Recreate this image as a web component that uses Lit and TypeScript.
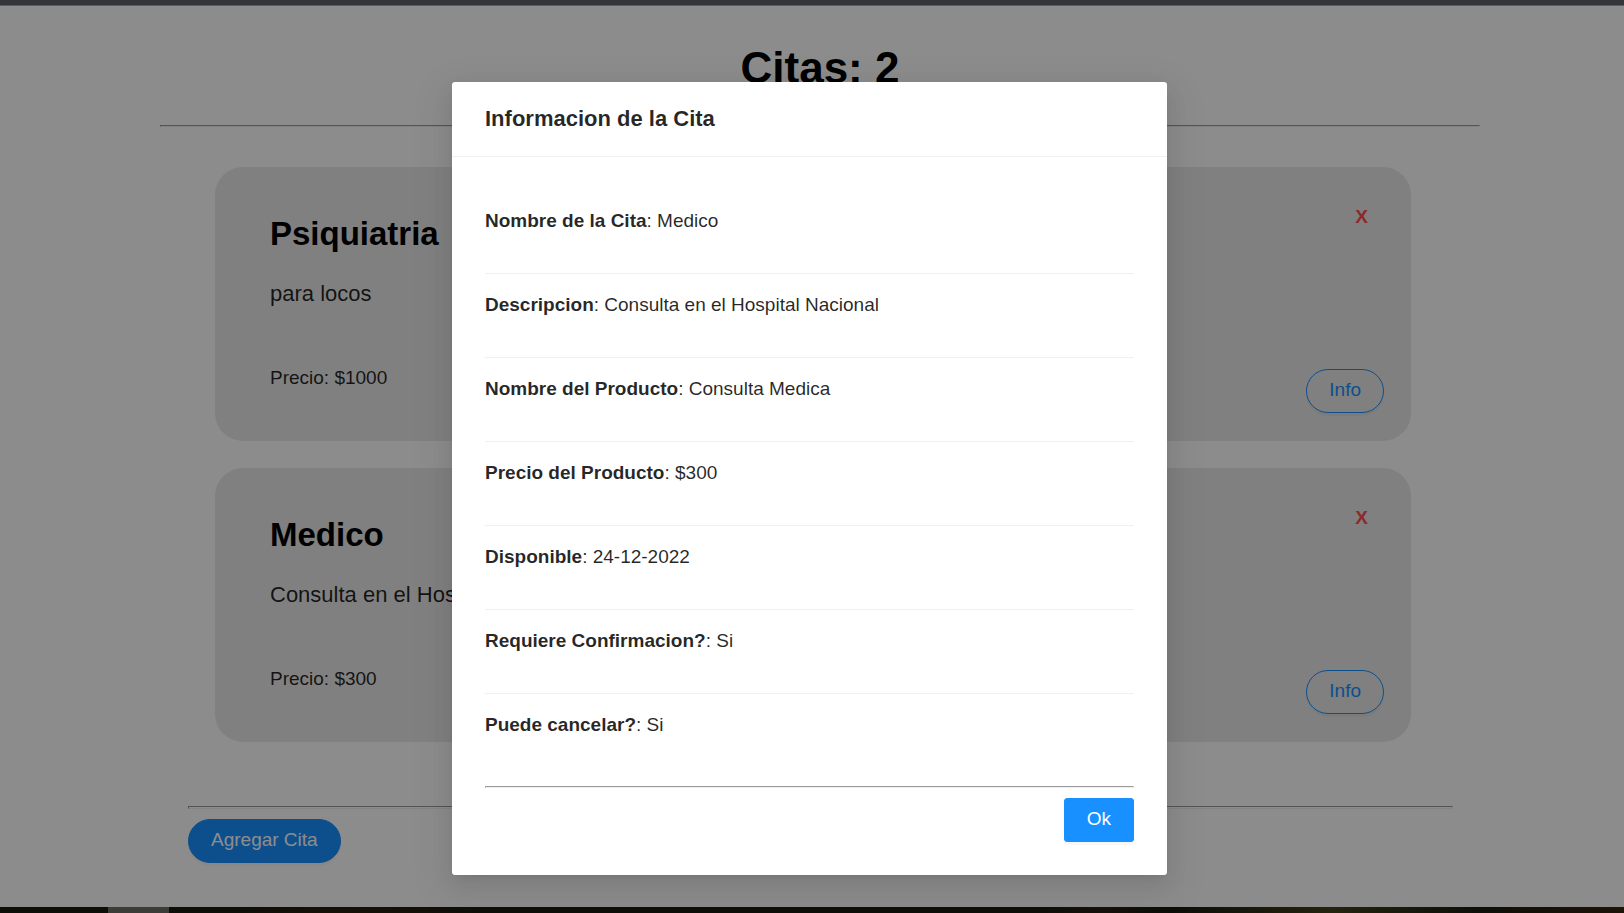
import { LitElement, html, css } from "lit";
import { customElement, property, state } from "lit/decorators.js";

interface Cita {
  nombre: string;
  descripcion: string;
  producto: string;
  precio: number;
  disponible: string;
  confirmacion: boolean;
  cancelar: boolean;
}

const sharedButton = css`
  button {
    font: inherit;
    cursor: pointer;
  }
  .btn {
    height: 44px;
    padding: 0 22px 2px;
    border: 1px solid #1890ff;
    border-radius: 3px;
    background: #1890ff;
    color: #fff;
    font-size: 19px;
    line-height: 30px;
    box-shadow: 0 3px 0 rgba(0, 0, 0, 0.03);
  }
  .round {
    border-radius: 44px;
  }
  .ghost {
    background: transparent;
    color: #1890ff;
  }
`;

@customElement("cita-card")
export class CitaCard extends LitElement {
  @property({ attribute: false }) cita!: Cita;

  static styles = [
    sharedButton,
    css`
      :host {
        display: block;
      }
      .card {
        display: flex;
        justify-content: space-between;
        padding: 35px 27px 28px 55px;
        border-radius: 28px;
        background: #e9e9e9;
      }
      .text {
        padding: 13px 0 20px;
      }
      h2 {
        margin: 0 0 24px;
        color: #000;
        font-size: 33px;
        line-height: 38px;
      }
      p {
        margin: 0;
        font-size: 19px;
        line-height: 30px;
      }
      .description {
        margin-bottom: 52px;
        font-size: 22px;
        line-height: 34px;
      }
      .actions {
        display: flex;
        flex-direction: column;
        justify-content: space-between;
        align-items: flex-end;
      }
      .remove {
        padding: 0 16px;
        border: 0;
        background: none;
        color: #ff4d4f;
        font-size: 19px;
        font-weight: bold;
        line-height: 30px;
      }
    `,
  ];

  private emit(name: string) {
    this.dispatchEvent(new CustomEvent(name));
  }

  render() {
    const { nombre, descripcion, precio } = this.cita;
    return html`
      <article class="card">
        <div class="text">
          <h2>${nombre}</h2>
          <p class="description">${descripcion}</p>
          <p>Precio: $${precio}</p>
        </div>
        <div class="actions">
          <button class="remove" type="button" @click=${() => this.emit("remove")}>X</button>
          <button class="btn round ghost" type="button" @click=${() => this.emit("info")}>Info</button>
        </div>
      </article>
    `;
  }
}

@customElement("cita-modal")
export class CitaModal extends LitElement {
  @property({ attribute: false }) cita!: Cita;

  static styles = [
    sharedButton,
    css`
      :host {
        position: absolute;
        inset: 0;
        display: flex;
        justify-content: center;
        align-items: flex-start;
        padding: 76px 5px 32px 0;
        background: rgba(0, 0, 0, 0.45);
      }
      .dialog {
        box-sizing: border-box;
        width: 100%;
        max-width: 715px;
        border-radius: 3px;
        background: #fff;
        color: rgba(0, 0, 0, 0.85);
        box-shadow:
          0 4px 8px -5px rgba(0, 0, 0, 0.12),
          0 8px 22px 0 rgba(0, 0, 0, 0.08),
          0 12px 38px 11px rgba(0, 0, 0, 0.05);
      }
      header {
        padding: 22px 33px;
        border-bottom: 1px solid #f0f0f0;
      }
      h2 {
        margin: 0;
        font-size: 22px;
        line-height: 30px;
      }
      .body {
        padding: 33px;
      }
      ul {
        margin: 0;
        padding: 0;
        list-style: none;
      }
      li {
        padding: 16px 0 37px;
        border-bottom: 1px solid #f0f0f0;
        font-size: 19px;
        line-height: 30px;
      }
      li:last-child {
        border-bottom: 0;
      }
      hr {
        margin: 9px 0 10px;
        border: 1px solid;
        border-color: #9a9a9a #eee #eee #9a9a9a;
      }
      footer {
        display: flex;
        justify-content: flex-end;
      }
    `,
  ];

  render() {
    const c = this.cita;
    const rows = [
      ["Nombre de la Cita", c.nombre],
      ["Descripcion", c.descripcion],
      ["Nombre del Producto", c.producto],
      ["Precio del Producto", `$${c.precio}`],
      ["Disponible", c.disponible],
      ["Requiere Confirmacion?", c.confirmacion ? "Si" : "No"],
      ["Puede cancelar?", c.cancelar ? "Si" : "No"],
    ];
    return html`
      <section class="dialog" role="dialog" aria-modal="true" aria-labelledby="title">
        <header><h2 id="title">Informacion de la Cita</h2></header>
        <div class="body">
          <ul>
            ${rows.map(([label, value]) => html`<li><strong>${label}</strong>: ${value}</li>`)}
          </ul>
          <hr />
          <footer>
            <button class="btn" type="button" @click=${() => this.dispatchEvent(new CustomEvent("close"))}>Ok</button>
          </footer>
        </div>
      </section>
    `;
  }
}

@customElement("app-root")
export class AppRoot extends LitElement {
  @state() private citas: Cita[] = [
    {
      nombre: "Psiquiatria",
      descripcion: "para locos",
      producto: "Consulta",
      precio: 1000,
      disponible: "24-12-2022",
      confirmacion: true,
      cancelar: true,
    },
    {
      nombre: "Medico",
      descripcion: "Consulta en el Hospital Nacional",
      producto: "Consulta Medica",
      precio: 300,
      disponible: "24-12-2022",
      confirmacion: true,
      cancelar: true,
    },
  ];

  @state() private selected: Cita | null = this.citas[1];

  static styles = [
    sharedButton,
    css`
      :host {
        display: flex;
        flex-direction: column;
        min-height: 100vh;
        background: #fff;
        color: rgba(0, 0, 0, 0.85);
        font-family: "Liberation Sans", Arial, sans-serif;
      }
      .top-bar {
        height: 5px;
        border-bottom: 1px solid #5f5b63;
        background: #34353a;
      }
      .bottom-bar {
        height: 6px;
        padding-left: 108px;
        background: linear-gradient(90deg, #0d0e08 0 14%, #171006 20%, #0f0f09 30% 64%, #16120b 68%, #0d0d08 72%, #24230f 82%, #0e0f08 91%, #1e1307 100%);
      }
      .active {
        width: 61px;
        height: 100%;
        background: #3d3c38;
      }
      main {
        position: relative;
        flex: 1;
        padding: 37px 144px 44px 160px;
      }
      h1 {
        margin: 0;
        color: #000;
        font-size: 44px;
        line-height: 50px;
        text-align: center;
      }
      hr {
        margin: 32px 0 40px;
        border: 1px solid;
        border-color: #9a9a9a #eee #eee #9a9a9a;
      }
      .list {
        display: grid;
        gap: 27px;
        padding: 0 69px 0 55px;
      }
      .add {
        padding: 0 27px 0 28px;
      }
      .add hr {
        height: 1px;
        margin: 64px 0 10px;
      }
    `,
  ];

  render() {
    return html`
      <div class="top-bar"></div>
      <main>
        <h1>Citas: ${this.citas.length}</h1>
        <hr />
        <div class="list">
          ${this.citas.map(
            (cita) => html`<cita-card
              .cita=${cita}
              @info=${() => (this.selected = cita)}
              @remove=${() => (this.citas = this.citas.filter((c) => c !== cita))}
            ></cita-card>`
          )}
        </div>
        <div class="add">
          <hr />
          <button class="btn round" type="button">Agregar Cita</button>
        </div>
        ${this.selected
          ? html`<cita-modal .cita=${this.selected} @close=${() => (this.selected = null)}></cita-modal>`
          : null}
      </main>
      <div class="bottom-bar"><div class="active"></div></div>
    `;
  }
}
